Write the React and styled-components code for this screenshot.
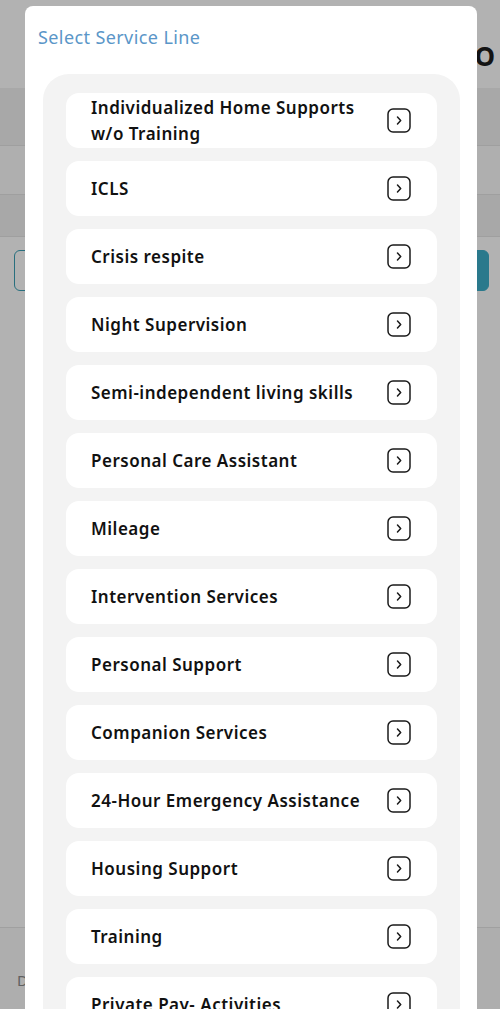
import styled, { createGlobalStyle } from 'styled-components';

const services = [
  'Individualized Home Supports w/o Training',
  'ICLS',
  'Crisis respite',
  'Night Supervision',
  'Semi-independent living skills',
  'Personal Care Assistant',
  'Mileage',
  'Intervention Services',
  'Personal Support',
  'Companion Services',
  '24-Hour Emergency Assistance',
  'Housing Support',
  'Training',
  'Private Pay- Activities',
];

const GlobalStyle = createGlobalStyle`
  html, body {
    margin: 0;
    padding: 0;
    height: 100%;
    overflow: hidden;
  }
  body {
    font-family: 'Noto Sans', 'Liberation Sans', sans-serif;
    background: #ffffff;
  }
`;

const ChevronBox = () => (
  <svg width="24" height="25" viewBox="0 0 24 25" fill="none">
    <rect x="1" y="1" width="22" height="23" rx="5" stroke="#1a1a1a" strokeWidth="1.5" />
    <path d="M10.5 9l3.2 3.5-3.2 3.5" stroke="#1a1a1a" strokeWidth="1.5" strokeLinecap="round" strokeLinejoin="round" />
  </svg>
);

const App = () => {
  return (
    <>
      <GlobalStyle />
      <Page>
        <Header>
          <HeaderTitle>O</HeaderTitle>
        </Header>
        <Band />
        <Band $light />
        <Band $short />
        <ButtonRow>
          <OutlineButton />
          <FilledButton />
        </ButtonRow>
        <Spacer />
        <Footer>
          <FooterText>D</FooterText>
        </Footer>
      </Page>

      <Overlay>
        <Modal>
          <ModalTitle>Select Service Line</ModalTitle>
          <Panel>
            {services.map((name) => (
              <ServiceItem key={name}>
                <ServiceName>{name}</ServiceName>
                <ChevronBox />
              </ServiceItem>
            ))}
          </Panel>
        </Modal>
      </Overlay>
    </>
  );
};

const Page = styled.div`
  display: flex;
  flex-direction: column;
  height: 1009px;
  background: #ffffff;
`;

const Header = styled.div`
  height: 88px;
  display: flex;
  align-items: flex-start;
  justify-content: flex-end;
  padding: 38px 5px 0 0;
  box-sizing: border-box;
`;

const HeaderTitle = styled.div`
  font-size: 26px;
  line-height: 36px;
  font-weight: 700;
  color: #1c1c1c;
`;

const Band = styled.div`
  height: ${(p) => (p.$light ? '48px' : p.$short ? '41px' : '57px')};
  background: ${(p) => (p.$light ? '#fbfbfb' : '#f1f1f1')};
  border-bottom: 1px solid #e4e4e4;
`;

const ButtonRow = styled.div`
  display: flex;
  gap: 20px;
  padding: 13px 11px 0 14px;
`;

const OutlineButton = styled.div`
  flex: 1;
  height: 41px;
  border: 1.5px solid #3a9fb5;
  border-radius: 6px;
  box-sizing: border-box;
`;

const FilledButton = styled(OutlineButton)`
  background: #3daec9;
  border-color: #3daec9;
`;

const Spacer = styled.div`
  flex: 1;
`;

const Footer = styled.div`
  height: 82px;
  border-top: 1px solid #e6e6e6;
  background: #fafafa;
  padding: 42px 0 0 17px;
  box-sizing: border-box;
`;

const FooterText = styled.div`
  font-size: 15px;
  color: #8a8a8a;
`;

const Overlay = styled.div`
  position: fixed;
  inset: 0;
  background: rgba(0, 0, 0, 0.3);
  overflow: hidden;
`;

const Modal = styled.div`
  margin: 6px 0 0 25px;
  width: 452px;
  min-height: 1100px;
  background: #ffffff;
  border-radius: 8px;
  padding: 19px 17px 0 18px;
  box-sizing: border-box;
`;

const ModalTitle = styled.div`
  font-size: 18px;
  letter-spacing: 0.4px;
  line-height: 24px;
  color: #5a96c8;
  margin-left: -5px;
  height: 49px;
`;

const Panel = styled.div`
  background: #f3f3f3;
  border-radius: 26px;
  padding: 19px 23px;
  display: flex;
  flex-direction: column;
  gap: 13px;
`;

const ServiceItem = styled.div`
  height: 55px;
  background: #ffffff;
  border-radius: 13px;
  display: flex;
  align-items: center;
  justify-content: space-between;
  padding: 0 26px 0 25px;
  box-sizing: border-box;
  overflow: hidden;
`;

const ServiceName = styled.div`
  font-size: 17px;
  font-weight: 600;
  letter-spacing: 0.5px;
  color: #111111;
  line-height: 26px;
  max-width: 272px;
`;

export default App;
